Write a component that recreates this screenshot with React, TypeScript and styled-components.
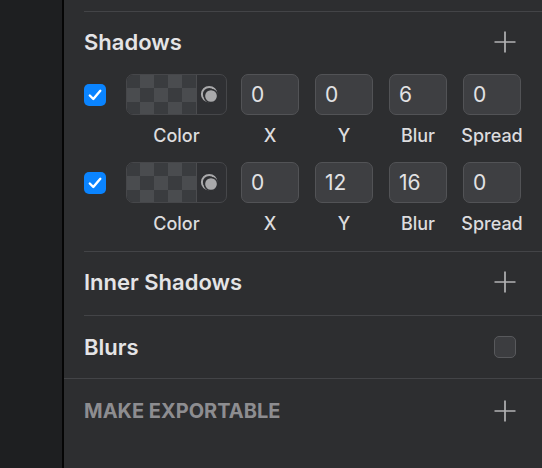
import React from "react";
import styled, { createGlobalStyle } from "styled-components";

const Global = createGlobalStyle`
  html, body { margin: 0; padding: 0; background: #1e1f21; }
  body { font-family: Inter, "Noto Sans", "Liberation Sans", sans-serif; -webkit-font-smoothing: antialiased; }
`;

const Shell = styled.div`
  display: flex;
  width: 542px;
  height: 468px;
  overflow: hidden;
`;

const Sidebar = styled.div`
  width: 62px;
  flex: none;
  background: #1e1f21;
  border-right: 2px solid #050505;
`;

const Panel = styled.div`
  flex: 1;
  min-width: 0;
  background: #2d2e30;
  padding-top: 11px;
  display: flex;
  flex-direction: column;
`;

const Section = styled.section<{ $full?: boolean; $padBottom?: number }>`
  border-top: 1px solid #434447;
  margin-left: ${(p) => (p.$full ? "0" : "20px")};
  padding-left: ${(p) => (p.$full ? "20px" : "0")};
  padding-right: 26px;
  padding-bottom: ${(p) => p.$padBottom ?? 0}px;
  min-width: 0;
  display: flex;
  flex-direction: column;
`;

const Header = styled.div<{ $h: number }>`
  height: ${(p) => p.$h}px;
  display: flex;
  align-items: center;
  justify-content: space-between;
`;

const Title = styled.h2<{ $muted?: boolean }>`
  margin: 0;
  font-size: ${(p) => (p.$muted ? "20px" : "22px")};
  font-weight: ${(p) => (p.$muted ? 700 : 600)};
  color: ${(p) => (p.$muted ? "#8d8d90" : "#e4e4e6")};
`;

const PlusWrap = styled.div`
  width: 22px;
  height: 22px;
  display: flex;
`;

const Plus = () => (
  <PlusWrap>
    <svg width="22" height="22" viewBox="0 0 22 22">
      <path d="M11 0.5V21.5M0.5 11H21.5" stroke="#b2b2b4" strokeWidth="1.7" />
    </svg>
  </PlusWrap>
);

const Rows = styled.div`
  display: flex;
  flex-direction: column;
  gap: 16px;
  padding-top: 2px;
  padding-bottom: 17px;
`;

const ShadowRow = styled.div`
  display: flex;
  align-items: flex-start;
`;

const CheckBox = styled.div<{ $on?: boolean }>`
  width: 22px;
  height: 22px;
  box-sizing: border-box;
  border-radius: 5px;
  flex: none;
  display: flex;
  align-items: center;
  justify-content: center;
  background: ${(p) => (p.$on ? "#0a84ff" : "#3c3d40")};
  border: ${(p) => (p.$on ? "none" : "1px solid #58595c")};
`;

const CheckAnchor = styled.div`
  height: 41px;
  display: flex;
  align-items: center;
  margin-right: 20px;
  flex: none;
`;

const Field = styled.div<{ $w: number; $gap?: number }>`
  width: ${(p) => p.$w}px;
  margin-right: ${(p) => p.$gap ?? 0}px;
  display: flex;
  flex-direction: column;
  align-items: center;
  flex: none;
`;

const Label = styled.div`
  margin-top: 11px;
  height: 20px;
  line-height: 20px;
  font-size: 18px;
  font-weight: 500;
  color: #dcdcde;
  white-space: nowrap;
`;

const Swatch = styled.div`
  width: 101px;
  height: 41px;
  box-sizing: border-box;
  border: 1px solid #46474a;
  border-radius: 7px;
  overflow: hidden;
  display: flex;
  background: #2f3033;
`;

const Checker = styled.div`
  width: 69px;
  height: 100%;
  border-right: 1px solid #4b4c4f;
  background-color: #3a3c3f;
  background-image: conic-gradient(#4a4c4f 25%, transparent 0 50%, #4a4c4f 0 75%, transparent 0);
  background-size: 28px 28px;
  background-position: -1px -1px;
`;

const SwatchIcon = styled.div`
  flex: 1;
  display: flex;
  align-items: center;
  justify-content: center;
  padding-right: 3px;
`;

const NumBox = styled.div`
  width: 58px;
  height: 41px;
  box-sizing: border-box;
  border: 1.5px solid #525356;
  border-radius: 7px;
  background: #3e3f42;
  padding-left: 9px;
  display: flex;
  align-items: center;
  font-size: 21px;
  color: #e2e2e4;
`;

const Check = () => (
  <svg width="14" height="12" viewBox="0 0 14 12">
    <path d="M1.8 6.5L5.3 10L12.3 1.8" fill="none" stroke="#fff" strokeWidth="2.4" strokeLinecap="round" strokeLinejoin="round" />
  </svg>
);

const BlendIcon = () => (
  <svg width="20" height="20" viewBox="0 0 20 20">
    <circle cx="9.2" cy="9.2" r="7.3" fill="none" stroke="#a9a9ab" strokeWidth="2" />
    <circle cx="11" cy="11" r="6.6" fill="#a9a9ab" stroke="#2f3033" strokeWidth="1.5" />
  </svg>
);

type Shadow = { x: number; y: number; blur: number; spread: number };

const shadows: Shadow[] = [
  { x: 0, y: 0, blur: 6, spread: 0 },
  { x: 0, y: 12, blur: 16, spread: 0 },
];

const ShadowLine = ({ s }: { s: Shadow }) => (
  <ShadowRow>
    <CheckAnchor>
      <CheckBox $on>
        <Check />
      </CheckBox>
    </CheckAnchor>
    <Field $w={101} $gap={14}>
      <Swatch>
        <Checker />
        <SwatchIcon>
          <BlendIcon />
        </SwatchIcon>
      </Swatch>
      <Label>Color</Label>
    </Field>
    <Field $w={58} $gap={16}>
      <NumBox>{s.x}</NumBox>
      <Label>X</Label>
    </Field>
    <Field $w={58} $gap={16}>
      <NumBox>{s.y}</NumBox>
      <Label>Y</Label>
    </Field>
    <Field $w={58} $gap={16}>
      <NumBox>{s.blur}</NumBox>
      <Label>Blur</Label>
    </Field>
    <Field $w={58}>
      <NumBox>{s.spread}</NumBox>
      <Label>Spread</Label>
    </Field>
  </ShadowRow>
);

export default function App() {
  return (
    <>
      <Global />
      <Shell>
        <Sidebar />
        <Panel>
          <Section>
            <Header $h={60}>
              <Title>Shadows</Title>
              <Plus />
            </Header>
            <Rows>
              {shadows.map((s, i) => (
                <ShadowLine key={i} s={s} />
              ))}
            </Rows>
          </Section>
          <Section $padBottom={3}>
            <Header $h={60}>
              <Title>Inner Shadows</Title>
              <Plus />
            </Header>
          </Section>
          <Section $padBottom={1}>
            <Header $h={61}>
              <Title>Blurs</Title>
              <CheckBox />
            </Header>
          </Section>
          <Section $full>
            <Header $h={64}>
              <Title $muted>MAKE EXPORTABLE</Title>
              <Plus />
            </Header>
          </Section>
        </Panel>
      </Shell>
    </>
  );
}
